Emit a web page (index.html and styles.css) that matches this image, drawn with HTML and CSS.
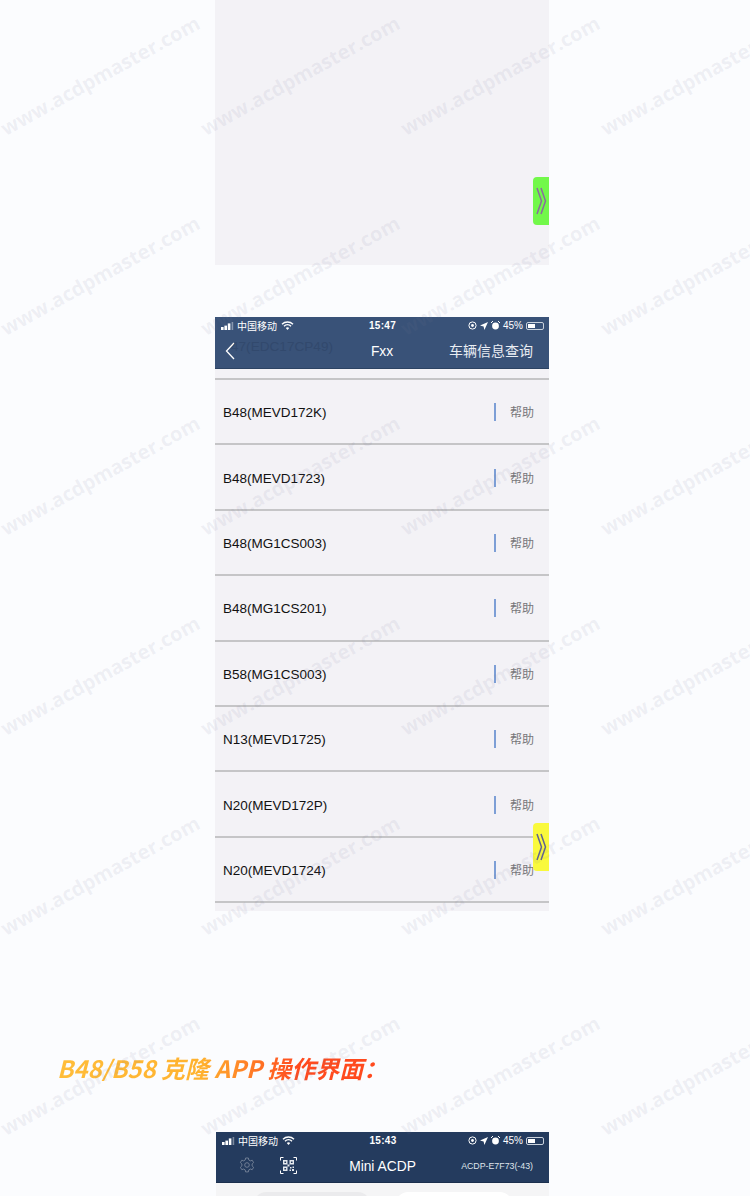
FILE: index.html
```html
<!DOCTYPE html>
<html lang="zh-CN">
<head>
  <meta charset="UTF-8">
  <meta name="viewport" content="width=device-width, initial-scale=1.0">
  <title>B48/B58 克隆 APP 操作界面</title>
  <link rel="stylesheet" href="styles.css">
</head>
<body>
  <div class="page">
    <div class="blank-shot">
      <div class="side-tab green">
        <svg width="12" height="30" viewBox="0 0 12 30"><path d="M2 2l4.500 13L2 28M6 2l4.500 13L6 28" fill="none" stroke="#8a6d9e" stroke-width="1.5"/></svg>
      </div>
    </div>

    <div class="list-shot">
      <div class="app-header">
        <div class="status-bar">
          <div class="status-left">
            <svg class="signal" width="14" height="8" viewBox="0 0 14 8"><rect x="0" y="5" width="2.6" height="3" fill="#fff"/><rect x="3.4" y="3.6" width="2.6" height="4.4" fill="#fff"/><rect x="6.8" y="1.4" width="2.6" height="6.6" fill="#fff"/><rect x="10.6" y="0" width="1.6" height="8" fill="#fff" opacity=".4"/></svg>
            <span>中国移动</span>
            <svg width="13" height="9" viewBox="0 0 13 9"><path d="M1 3.2a8 8 0 0 1 11 0M3 5.2a5 5 0 0 1 7 0" fill="none" stroke="#fff" stroke-width="1.4"/><path d="M6.5 9L4.8 7a2.5 2.5 0 0 1 3.4 0z" fill="#fff"/></svg>
          </div>
          <div class="status-time">15:47</div>
          <div class="status-right">
            <svg width="9" height="9" viewBox="0 0 9 9"><circle cx="4.5" cy="4.5" r="3.6" fill="none" stroke="#fff"/><circle cx="4.5" cy="4.5" r="1.4" fill="#fff"/></svg>
            <svg width="8" height="8" viewBox="0 0 8 8"><path d="M8 0L0 3.6l3.6.8.8 3.6z" fill="#fff"/></svg>
            <svg width="9" height="9" viewBox="0 0 9 9"><circle cx="4.5" cy="5" r="3.4" fill="#fff"/><path d="M0 2l2-2M9 2L7 0" stroke="#fff"/></svg>
            <span>45%</span>
            <span class="battery"><span class="battery-level"></span></span>
          </div>
        </div>
        <div class="nav-bar">
          <svg class="back" width="10" height="18" viewBox="0 0 10 18"><path d="M9 1L1.500 9 9 17" fill="none" stroke="#fff" stroke-width="1.300"/></svg>
          <span class="nav-ghost">47(EDC17CP49)</span>
          <span class="nav-title">Fxx</span>
          <span class="nav-action">车辆信息查询</span>
        </div>
      </div>

      <div class="ecu-list">
        <div class="ecu-row"><span>B48(MEVD172K)</span><a class="help">帮助</a></div>
        <div class="ecu-row"><span>B48(MEVD1723)</span><a class="help">帮助</a></div>
        <div class="ecu-row"><span>B48(MG1CS003)</span><a class="help">帮助</a></div>
        <div class="ecu-row"><span>B48(MG1CS201)</span><a class="help">帮助</a></div>
        <div class="ecu-row"><span>B58(MG1CS003)</span><a class="help">帮助</a></div>
        <div class="ecu-row"><span>N13(MEVD1725)</span><a class="help">帮助</a></div>
        <div class="ecu-row"><span>N20(MEVD172P)</span><a class="help">帮助</a></div>
        <div class="ecu-row"><span>N20(MEVD1724)</span><a class="help">帮助</a></div>
      </div>

      <div class="side-tab yellow">
        <svg width="12" height="30" viewBox="0 0 12 30"><path d="M2 2l4.500 13L2 28M6 2l4.500 13L6 28" fill="none" stroke="#5f6390" stroke-width="1.5"/></svg>
      </div>
    </div>

    <h2 class="section-title">B48/B58 克隆 APP 操作界面：</h2>

    <div class="mini-shot">
      <div class="app-header dark">
        <div class="status-bar">
          <div class="status-left">
            <svg class="signal" width="14" height="8" viewBox="0 0 14 8"><rect x="0" y="5" width="2.6" height="3" fill="#fff"/><rect x="3.4" y="3.6" width="2.6" height="4.4" fill="#fff"/><rect x="6.8" y="1.4" width="2.6" height="6.6" fill="#fff"/><rect x="10.6" y="0" width="1.6" height="8" fill="#fff" opacity=".4"/></svg>
            <span>中国移动</span>
            <svg width="13" height="9" viewBox="0 0 13 9"><path d="M1 3.2a8 8 0 0 1 11 0M3 5.2a5 5 0 0 1 7 0" fill="none" stroke="#fff" stroke-width="1.4"/><path d="M6.5 9L4.8 7a2.5 2.5 0 0 1 3.4 0z" fill="#fff"/></svg>
          </div>
          <div class="status-time">15:43</div>
          <div class="status-right">
            <svg width="9" height="9" viewBox="0 0 9 9"><circle cx="4.5" cy="4.5" r="3.6" fill="none" stroke="#fff"/><circle cx="4.5" cy="4.5" r="1.4" fill="#fff"/></svg>
            <svg width="8" height="8" viewBox="0 0 8 8"><path d="M8 0L0 3.6l3.6.8.8 3.6z" fill="#fff"/></svg>
            <svg width="9" height="9" viewBox="0 0 9 9"><circle cx="4.5" cy="5" r="3.4" fill="#fff"/><path d="M0 2l2-2M9 2L7 0" stroke="#fff"/></svg>
            <span>45%</span>
            <span class="battery"><span class="battery-level"></span></span>
          </div>
        </div>
        <div class="nav-bar mini-nav">
          <svg class="gear" width="16" height="16" viewBox="0 0 16 16"><path d="M6.6 1h2.8l.4 2 1.5.9 1.900-.7 1.400 2.400-1.500 1.400v1.900l1.500 1.400-1.400 2.400-1.900-.7-1.500.9-.4 2H6.600l-.4-2-1.500-.9-1.900.7-1.400-2.400 1.500-1.400V7L1.400 5.600l1.400-2.400 1.900.7 1.500-.9z" fill="none" stroke="#77849a" stroke-width=".9"/><circle cx="8" cy="8" r="2.300" fill="none" stroke="#77849a" stroke-width=".9"/></svg>
          <svg class="scan" width="17" height="17" viewBox="0 0 17 17"><path d="M.5 3.500V.5h3M13.500.5h3v3M16.500 13.500v3h-3M3.500 16.500h-3v-3" fill="none" stroke="#fff"/><path d="M3 3h4.500v4.500H3zM9.500 3H14v4.500H9.500zM3 9.500h4.500V14H3zM10 10h1.500v1.500H10zM12.500 9.500H14V11h-1.500zM9.500 12.500H11V14H9.500zM12 12h2v2h-2zM7.500 7.500h2v2h-2z" fill="#e6eaef"/><path d="M4.400 4.400h1.700v1.700H4.400zM10.900 4.400h1.700v1.700h-1.700zM4.400 10.900h1.700v1.700H4.400z" fill="#243b5e"/></svg>
          <span class="nav-title">Mini ACDP</span>
          <span class="nav-device">ACDP-E7F73(-43)</span>
        </div>
      </div>
      <div class="mode-tabs">
        <span class="mode-tab"></span>
        <span class="mode-tab selected"></span>
      </div>
    </div>

    <div class="watermarks">
      <span>www.acdpmaster.com</span><span>www.acdpmaster.com</span><span>www.acdpmaster.com</span><span>www.acdpmaster.com</span>
      <span>www.acdpmaster.com</span><span>www.acdpmaster.com</span><span>www.acdpmaster.com</span><span>www.acdpmaster.com</span>
      <span>www.acdpmaster.com</span><span>www.acdpmaster.com</span><span>www.acdpmaster.com</span><span>www.acdpmaster.com</span>
      <span>www.acdpmaster.com</span><span>www.acdpmaster.com</span><span>www.acdpmaster.com</span><span>www.acdpmaster.com</span>
      <span>www.acdpmaster.com</span><span>www.acdpmaster.com</span><span>www.acdpmaster.com</span><span>www.acdpmaster.com</span>
      <span>www.acdpmaster.com</span><span>www.acdpmaster.com</span><span>www.acdpmaster.com</span><span>www.acdpmaster.com</span>
    </div>
  </div>
</body>
</html>
```

FILE: styles.css
```css
* {
  box-sizing: border-box;
  margin: 0;
  padding: 0;
}

html,
body {
  height: 100%;
  overflow: hidden;
}

body {
  background: #fbfcfe;
  font-family: "Liberation Sans", "Noto Sans CJK SC", sans-serif;
}

.page {
  position: relative;
  height: 1196px;
  overflow: hidden;
}

.blank-shot {
  position: relative;
  width: 334px;
  height: 265px;
  margin-left: 215px;
  background: #f3f2f6;
}

.side-tab {
  position: absolute;
  right: 0;
  width: 16px;
  height: 48px;
  border-radius: 4px 0 0 4px;
  display: flex;
  align-items: center;
  justify-content: center;
}

.side-tab.green {
  top: 177px;
  background: #72f84a;
}

.side-tab.yellow {
  top: 506px;
  background: #f9f93c;
}

.list-shot {
  position: relative;
  width: 334px;
  margin: 52px 0 0 215px;
  background: #f3f2f6;
}

.app-header {
  height: 52px;
  background: #395278;
  color: #fff;
  border-bottom: 1px solid #2c4363;
}

.app-header.dark {
  height: 51px;
  background: #243b5e;
  border-bottom-color: #1b2f4d;
}

.status-bar {
  height: 17px;
  padding: 0 5px 0 6px;
  display: grid;
  grid-template-columns: 1fr auto 1fr;
  align-items: center;
  font-size: 10px;
}

.status-left,
.status-right {
  display: flex;
  align-items: center;
  gap: 3px;
}

.status-left {
  gap: 2px;
}

.status-left span {
  margin-right: 2px;
}

.status-right {
  justify-content: flex-end;
}

.status-time {
  font-weight: bold;
  letter-spacing: 0.3px;
}

.battery {
  width: 18px;
  height: 8px;
  padding: 1px;
  border: 1px solid #c9d1dc;
  border-radius: 2px;
  display: block;
}

.battery-level {
  display: block;
  width: 7px;
  height: 100%;
  background: #fff;
}

.nav-bar {
  position: relative;
  height: 34px;
  display: flex;
  align-items: center;
  justify-content: center;
}

.back {
  position: absolute;
  left: 10px;
  top: 8px;
}

.nav-ghost {
  position: absolute;
  left: 16px;
  top: 5px;
  font-size: 13.6px;
  color: #32496d;
}

.nav-title {
  font-size: 13.8px;
}

.nav-action {
  position: absolute;
  right: 16px;
  top: 6px;
  font-size: 14px;
  color: #e9edf3;
}

.gear {
  position: absolute;
  left: 23px;
  top: 8px;
}

.scan {
  position: absolute;
  left: 64px;
  top: 8px;
}

.nav-device {
  position: absolute;
  right: 16px;
  top: 12px;
  font-size: 8.8px;
  color: #dfe4ea;
}

.ecu-list {
  padding: 9px 0 8px;
}

.ecu-row {
  height: 65.4px;
  padding: 2px 15px 0 8px;
  display: flex;
  align-items: center;
  justify-content: space-between;
  font-size: 13.5px;
  color: #111;
  border-top: 2px solid #c5c5c7;
}

.ecu-row:last-child {
  height: 67.4px;
  border-bottom: 2px solid #c5c5c7;
}

.help {
  position: relative;
  margin-top: -2px;
  font-size: 12px;
  color: #77777a;
}

.help::before {
  content: "";
  position: absolute;
  left: -16px;
  top: 0;
  width: 2px;
  height: 18px;
  background: #7d9fd6;
}

.section-title {
  margin: 144px 0 0 57px;
  font-size: 24px;
  line-height: 26px;
  font-style: italic;
  font-weight: bold;
  font-family: "Noto Sans CJK SC", sans-serif;
  width: 320px;
  white-space: nowrap;
  background: linear-gradient(90deg, #ffbd3a, #ffb22f 45%, #ff4a1e 75%, #ff4a1e);
  -webkit-background-clip: text;
  background-clip: text;
  color: transparent;
}

.mini-shot {
  width: 333px;
  margin: 51px 0 0 216px;
  background: #f5f5f6;
}

.mode-tabs {
  padding-top: 9px;
  display: flex;
  gap: 26px;
  justify-content: center;
}

.mode-tab {
  width: 116px;
  height: 30px;
  border-radius: 12px;
  background: #ebebed;
}

.mode-tab.selected {
  background: #fff;
}

.watermarks {
  position: absolute;
  inset: 0;
  display: grid;
  grid-template-columns: repeat(4, 200px);
  grid-auto-rows: 200px;
  pointer-events: none;
}

.watermarks span {
  align-self: center;
  justify-self: center;
  white-space: nowrap;
  font-family: "Open Sans", sans-serif;
  font-size: 20px;
  font-weight: 700;
  color: rgba(120, 120, 150, 0.1);
  transform: translate(0, -25px) rotate(-29deg);
}
```
